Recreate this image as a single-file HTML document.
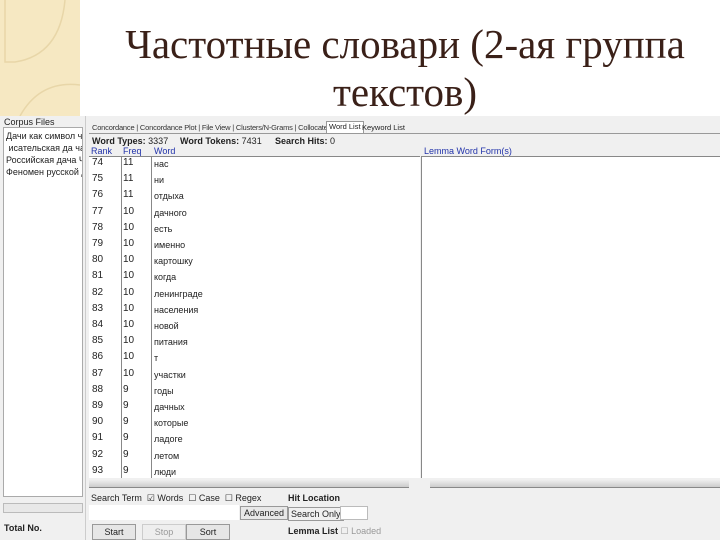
<!DOCTYPE html>
<html><head><meta charset="utf-8"><style>
*{margin:0;padding:0;box-sizing:border-box}
body{width:720px;height:540px;overflow:hidden;background:#fff;position:relative;font-family:"Liberation Sans",sans-serif}
.a{position:absolute}
.t{font-family:"Liberation Serif","Noto Serif CJK SC",serif;color:#3a2018;font-size:41px;white-space:nowrap;text-align:center;width:700px;left:55px;line-height:48px}
.s{font-size:9px;color:#222;white-space:nowrap}
.r{font-size:10px;color:#222;white-space:nowrap;position:absolute}
</style></head><body>
<div class="a" style="left:0;top:0;width:80px;height:116px;background:#f6e8c2"></div>
<svg class="a" style="left:0;top:0" width="80" height="116"><path d="M5 0 V62 H15 Q60 55 65 0" fill="none" stroke="#e8d6a8" stroke-width="1.5"/><path d="M20 116 Q40 80 80 85" fill="none" stroke="#e8d6a8" stroke-width="1.5"/></svg>
<div class="a t" style="top:20px">Частотные словари (2-ая группа</div>
<div class="a t" style="top:68px">текстов)</div>

<div class="a" style="left:0;top:116px;width:720px;height:424px;background:#f0f0f0"></div>
<div class="a s" style="left:4px;top:117px">Corpus Files</div>
<div class="a" style="left:3px;top:127px;width:80px;height:370px;background:#fff;border:1px solid #aaa;overflow:hidden">
<div class="s" style="padding:2px 0 0 2px;line-height:12px">Дачи как символ част<br>&nbsp;исательская да ча.txt<br>Российская дача Чех<br>Феномен русской дач</div></div>
<div class="a" style="left:3px;top:503px;width:80px;height:10px;background:#e8e8e8;border:1px solid #bbb"></div>
<div class="a s" style="left:4px;top:523px;font-weight:bold">Total No.</div>
<div class="a" style="left:85px;top:116px;width:1px;height:424px;background:#ccc"></div>

<div class="a s" style="left:92px;top:123px;font-size:7.5px;color:#333;letter-spacing:-0.2px">Concordance | Concordance Plot | File View | Clusters/N-Grams | Collocates</div>
<div class="a s" style="left:326px;top:121px;background:#fff;border:1px solid #999;border-bottom:none;padding:0 2px;font-size:7.5px;height:12px">Word List</div>
<div class="a s" style="left:362px;top:123px;font-size:7.5px">Keyword List</div>
<div class="a" style="left:89px;top:133px;width:631px;height:1px;background:#999"></div>
<div class="a s" style="left:92px;top:136px;font-weight:bold">Word Types: <span style="font-weight:normal">3337</span></div>
<div class="a s" style="left:180px;top:136px;font-weight:bold">Word Tokens: <span style="font-weight:normal">7431</span></div>
<div class="a s" style="left:275px;top:136px;font-weight:bold">Search Hits: <span style="font-weight:normal">0</span></div>
<div class="a s" style="left:91px;top:146px;color:#2233aa">Rank</div>
<div class="a s" style="left:123px;top:146px;color:#2233aa">Freq</div>
<div class="a s" style="left:154px;top:146px;color:#2233aa">Word</div>
<div class="a s" style="left:424px;top:146px;color:#2233aa">Lemma Word Form(s)</div>
<div class="a" style="left:89px;top:156px;width:331px;height:322px;background:#fff;border-top:1px solid #888"></div>
<div class="a" style="left:421px;top:156px;width:299px;height:322px;background:#fff;border-top:1px solid #888;border-left:1px solid #888"></div>
<div class="a" style="left:121px;top:156px;width:1px;height:322px;background:#888"></div>
<div class="a" style="left:151px;top:156px;width:1px;height:322px;background:#888"></div>
<div id="rows"></div>
<div class="a" style="left:89px;top:480px;width:320px;height:8px;background:linear-gradient(#eee,#ccc);border-bottom:1px solid #888"></div>
<div class="a" style="left:430px;top:480px;width:290px;height:8px;background:linear-gradient(#eee,#ccc);border-bottom:1px solid #888"></div>
<div class="a s" style="left:91px;top:493px">Search Term &nbsp;☑ Words &nbsp;☐ Case &nbsp;☐ Regex</div>
<div class="a" style="left:89px;top:505px;width:150px;height:15px;background:#fff"></div>
<div class="a s" style="left:240px;top:506px;border:1px solid #999;background:#e8e8e8;padding:1px 3px">Advanced</div>
<div class="a s" style="left:288px;top:493px;font-weight:bold">Hit Location</div>
<div class="a s" style="left:288px;top:507px;border:1px solid #999;padding:1px 2px">Search Only</div>
<div class="a" style="left:340px;top:506px;width:28px;height:14px;background:#fff;border:1px solid #bbb"></div>
<div class="a s" style="left:92px;top:524px;width:44px;height:16px;border:1px solid #999;background:#e6e6e6;text-align:center;padding-top:2px">Start</div>
<div class="a s" style="left:142px;top:524px;width:44px;height:16px;border:1px solid #ccc;background:#eee;text-align:center;padding-top:2px;color:#999">Stop</div>
<div class="a s" style="left:186px;top:524px;width:44px;height:16px;border:1px solid #999;background:#e6e6e6;text-align:center;padding-top:2px">Sort</div>
<div class="a s" style="left:288px;top:526px;font-weight:bold">Lemma List <span style="font-weight:normal;color:#999">☐ Loaded</span></div>
<script>
var w=["нас","ни","отдыха","дачного","есть","именно","картошку","когда","ленинграде","населения","новой","питания","т","участки","годы","дачных","которые","ладоге","летом","люди"];
var h="";for(var i=0;i<20;i++){var y=157+i*16.2;h+='<div class="r" style="left:92px;top:'+y+'px">'+(74+i)+'</div><div class="r" style="left:123px;top:'+y+'px">'+(i<3?11:i<14?10:9)+'</div><div class="r" style="left:154px;top:'+(y+2)+'px;font-size:9px">'+w[i]+'</div>';}
document.getElementById("rows").innerHTML=h;
</script>
</body></html>
